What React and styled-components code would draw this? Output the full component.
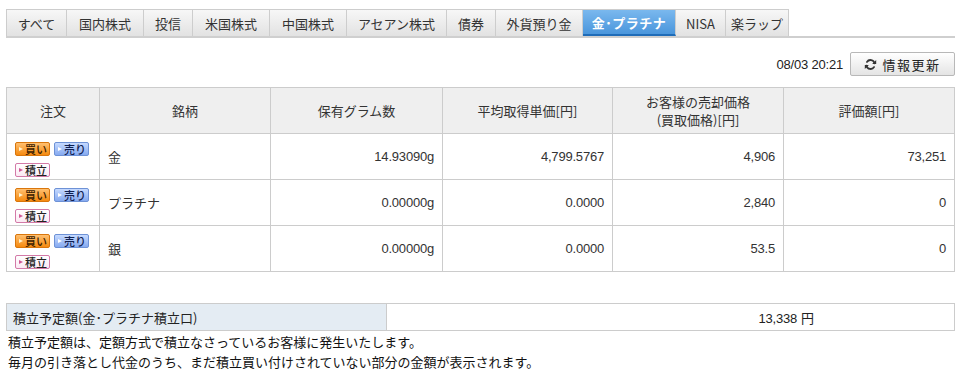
import styled, { createGlobalStyle } from "styled-components";

const GlobalStyle = createGlobalStyle`
  body {
    margin: 0;
    background: #fff;
    font-family: "Noto Sans CJK JP", "Noto Sans", sans-serif;
    font-size: 13px;
    color: #333;
  }
`;

const Page = styled.div`
  width: 949px;
  padding: 9px 0 0 6px;
`;

const TabBar = styled.ul`
  display: flex;
  margin: 0;
  padding: 0;
  list-style: none;
  border-bottom: 2px solid #cfcfcf;
`;

const Tab = styled.li`
  box-sizing: border-box;
  width: ${(p) => p.w}px;
  height: 27px;
  display: flex;
  align-items: center;
  justify-content: center;
  white-space: nowrap;
  border: 1px solid #cdcdcd;
  border-left: ${(p) => (p.first ? "1px solid #cdcdcd" : "none")};
  border-bottom: ${(p) => (p.active ? "2px solid #1f6cb8" : "none")};
  background: ${(p) =>
    p.active
      ? "linear-gradient(#7ab8ee, #4a96dc)"
      : "linear-gradient(#f7f7f7, #e2e2e2)"};
  color: ${(p) => (p.active ? "#fff" : "#333")};
  font-weight: ${(p) => (p.active ? "bold" : "normal")};
  margin-bottom: ${(p) => (p.active ? "-2px" : "0")};
  letter-spacing: ${(p) => (p.active ? "0.5px" : "0")};
`;

const UpdateRow = styled.div`
  display: flex;
  justify-content: flex-end;
  align-items: center;
  gap: 7px;
  margin: 14px 0 11px;
`;

const Stamp = styled.span`
  color: #222;
  font-family: "Liberation Sans", sans-serif;
  font-size: 13px;
  letter-spacing: -0.2px;
`;

const RefreshButton = styled.button`
  box-sizing: border-box;
  width: 105px;
  height: 24px;
  display: flex;
  align-items: center;
  justify-content: center;
  gap: 5px;
  border: 1px solid #b8b8b8;
  border-radius: 2px;
  background: linear-gradient(#ffffff, #e4e4e4);
  color: #222;
  font-family: "Noto Sans CJK JP", sans-serif;
  font-size: 13px;
  font-weight: normal;
  letter-spacing: 1.5px;
  padding: 0;
`;

const Table = styled.table`
  width: 100%;
  border-collapse: collapse;
  table-layout: fixed;
`;

const Th = styled.th`
  height: 46px;
  box-sizing: border-box;
  border: 1px solid #cccccc;
  background: #efefef;
  font-weight: normal;
  color: #333;
  line-height: 18px;
  padding: 0;
`;

const Td = styled.td`
  height: 46px;
  box-sizing: border-box;
  border: 1px solid #cccccc;
  padding: 0 8px;
  text-align: ${(p) => (p.num ? "right" : "left")};
  font-family: ${(p) =>
    p.num ? '"Liberation Sans", sans-serif' : '"Noto Sans CJK JP", sans-serif'};
  font-size: 13px;
  letter-spacing: ${(p) => (p.num ? "-0.2px" : "0")};
  color: #333;
  vertical-align: middle;
`;

const OrderCell = styled.td`
  height: 46px;
  box-sizing: border-box;
  border: 1px solid #cccccc;
  padding: 8px 0 0 8px;
  vertical-align: top;
`;

const ButtonGrid = styled.div`
  display: flex;
  flex-wrap: wrap;
  gap: 7px 4px;
  width: 80px;
`;

const palettes = {
  buy: {
    bg: "linear-gradient(#ffc070, #f58a10)",
    border: "#d9760c",
    arrow: "#fff3d0",
    color: "#3a2000",
  },
  sell: {
    bg: "linear-gradient(#c6daff, #86aaf0)",
    border: "#6e92d6",
    arrow: "#ffffff",
    color: "#102050",
  },
  save: {
    bg: "linear-gradient(#ffffff, #fbe9f3)",
    border: "#d37aa8",
    arrow: "#d05a96",
    color: "#222",
  },
};

const OrderButton = styled.span`
  box-sizing: border-box;
  width: 35px;
  height: 14px;
  display: inline-flex;
  align-items: center;
  gap: 1px;
  padding-left: 3px;
  border: 1px solid ${(p) => palettes[p.kind].border};
  border-radius: 2px;
  background: ${(p) => palettes[p.kind].bg};
  color: ${(p) => palettes[p.kind].color};
  font-size: 11px;
  font-weight: 500;
  line-height: 1;

  &::before {
    content: "";
    border-left: 4px solid ${(p) => palettes[p.kind].arrow};
    border-top: 2.5px solid transparent;
    border-bottom: 2.5px solid transparent;
    margin-right: 1px;
  }
`;

const SummaryTable = styled.table`
  width: 100%;
  border-collapse: collapse;
  margin-top: 31px;
`;

const SummaryLabel = styled.td`
  width: 380px;
  height: 27px;
  box-sizing: border-box;
  border: 1px solid #cccccc;
  background: #e4ecf3;
  padding: 0 6px;
  color: #222;
`;

const SummaryValue = styled.td`
  border: 1px solid #cccccc;
  text-align: right;
  padding-right: 140px;
  color: #222;
  font-size: 13px;
`;

const Amount = styled.span`
  font-family: "Liberation Sans", sans-serif;
  font-size: 13px;
  letter-spacing: -0.2px;
  margin-right: 4px;
`;

const Notes = styled.div`
  margin: 1px 0 0 2px;
  line-height: 20px;
  color: #111;
`;

const tabs = [
  ["すべて", 61],
  ["国内株式", 77],
  ["投信", 49],
  ["米国株式", 77],
  ["中国株式", 77],
  ["アセアン株式", 100],
  ["債券", 49],
  ["外貨預り金", 87],
  ["金･プラチナ", 93],
  ["NISA", 50],
  ["楽ラップ", 63],
];

const rows = [
  { name: "金", grams: "14.93090g", avg: "4,799.5767", price: "4,906", value: "73,251" },
  { name: "プラチナ", grams: "0.00000g", avg: "0.0000", price: "2,840", value: "0" },
  { name: "銀", grams: "0.00000g", avg: "0.0000", price: "53.5", value: "0" },
];

const RefreshIcon = () => (
  <svg width="13" height="13" viewBox="0 0 16 16" fill="none">
    <path
      d="M13 6.5A5.2 5.2 0 0 0 3.6 4.8"
      stroke="#333"
      strokeWidth="2.2"
      strokeLinecap="round"
    />
    <path d="M15 2.5v5h-5z" fill="#333" />
    <path
      d="M3 9.5a5.2 5.2 0 0 0 9.4 1.7"
      stroke="#333"
      strokeWidth="2.2"
      strokeLinecap="round"
    />
    <path d="M1 13.5v-5h5z" fill="#333" />
  </svg>
);

export default function App() {
  return (
    <>
      <GlobalStyle />
      <Page>
        <TabBar>
          {tabs.map(([label, w], i) => (
            <Tab key={label} w={w} first={i === 0} active={label === "金･プラチナ"}>
              {label}
            </Tab>
          ))}
        </TabBar>

        <UpdateRow>
          <Stamp>08/03 20:21</Stamp>
          <RefreshButton>
            <RefreshIcon />
            情報更新
          </RefreshButton>
        </UpdateRow>

        <Table>
          <colgroup>
            <col style={{ width: 93 }} />
            <col style={{ width: 171 }} />
            <col style={{ width: 172 }} />
            <col style={{ width: 170 }} />
            <col style={{ width: 171 }} />
            <col />
          </colgroup>
          <thead>
            <tr>
              <Th>注文</Th>
              <Th>銘柄</Th>
              <Th>保有グラム数</Th>
              <Th>平均取得単価[円]</Th>
              <Th>
                お客様の売却価格
                <br />
                (買取価格)[円]
              </Th>
              <Th>評価額[円]</Th>
            </tr>
          </thead>
          <tbody>
            {rows.map((r) => (
              <tr key={r.name}>
                <OrderCell>
                  <ButtonGrid>
                    <OrderButton kind="buy">買い</OrderButton>
                    <OrderButton kind="sell">売り</OrderButton>
                    <OrderButton kind="save">積立</OrderButton>
                  </ButtonGrid>
                </OrderCell>
                <Td>{r.name}</Td>
                <Td num>{r.grams}</Td>
                <Td num>{r.avg}</Td>
                <Td num>{r.price}</Td>
                <Td num>{r.value}</Td>
              </tr>
            ))}
          </tbody>
        </Table>

        <SummaryTable>
          <tbody>
            <tr>
              <SummaryLabel>積立予定額(金･プラチナ積立口)</SummaryLabel>
              <SummaryValue>
                <Amount>13,338</Amount>円
              </SummaryValue>
            </tr>
          </tbody>
        </SummaryTable>

        <Notes>
          積立予定額は、定額方式で積立なさっているお客様に発生いたします。
          <br />
          毎月の引き落とし代金のうち、まだ積立買い付けされていない部分の金額が表示されます。
        </Notes>
      </Page>
    </>
  );
}
